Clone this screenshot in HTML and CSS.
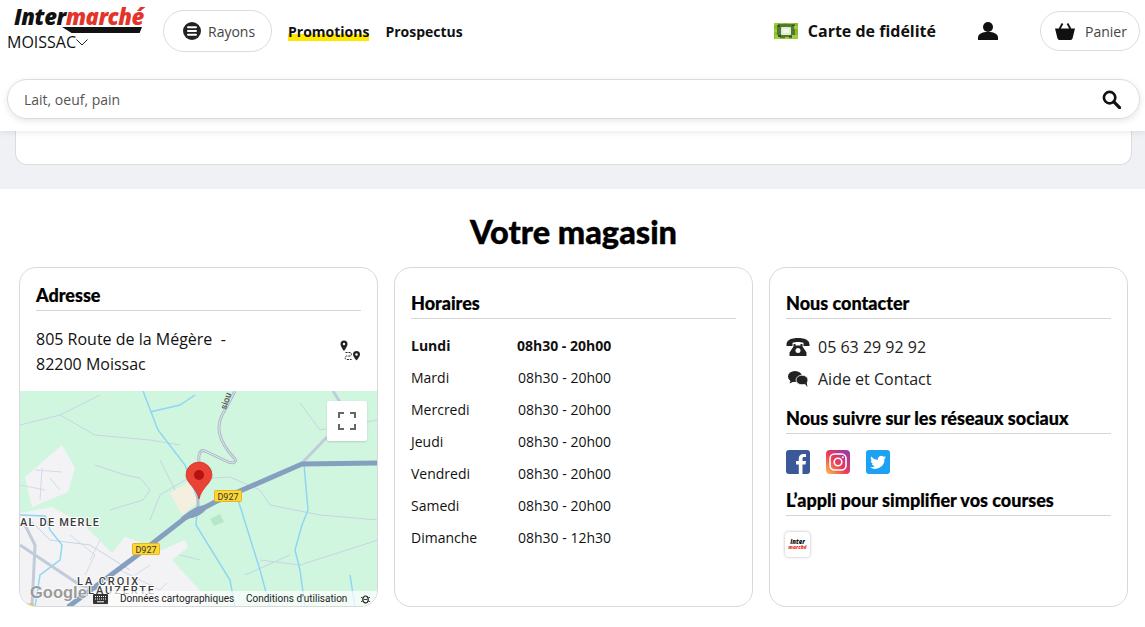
FILE: index.html
```html
<!DOCTYPE html>
<html lang="fr">
<head>
  <meta charset="UTF-8">
  <meta name="viewport" content="width=device-width, initial-scale=1.0">
  <title>Intermarché Moissac</title>
  <link rel="stylesheet" href="styles.css">
</head>
<body>
  <header class="site-header">
    <div class="top-row">
      <div class="store">
        <a class="logo" href="#">
          <span class="logo-text"><span class="logo-inter">Inter</span><span class="logo-marche">marché</span></span>
          <span class="logo-bar"></span>
        </a>
        <button class="store-btn">MOISSAC
          <svg viewBox="0 0 12 7" width="12" height="7"><polyline points="0.5,0.5 6,6 11.5,0.5" fill="none" stroke="#222" stroke-width="1"/></svg>
        </button>
      </div>
      <button class="pill rayons">
        <svg viewBox="0 0 18 18" width="18" height="18"><circle cx="9" cy="9" r="9" fill="#222"/><path d="M5 5.200h8M5 9h8M5 12.800h8" stroke="#fff" stroke-width="2" stroke-linecap="round"/></svg>
        Rayons
      </button>
      <nav class="main-nav">
        <a class="promo" href="#">Promotions</a>
        <a href="#">Prospectus</a>
      </nav>
      <a class="fidelite" href="#">
        <svg viewBox="0 0 24 16" width="24" height="16">
          <rect width="24" height="16" fill="#8dbb2c"/>
          <rect x="3" y="1" width="18" height="14" fill="#4f7a33"/>
          <path d="M0 0h4v2H0zM6 0h3v1H6zM14 0h5v1h-5zM20 3h4v3h-4zM0 6h3v3H0zM1 12h5v4H1zM11 14h4v2h-4zM18 12h6v4h-6z" fill="#a4cc38"/>
          <path d="M4 2h2v2H4zM18 2h2v1h-2zM4 12h3v2H4zM15 13h3v1h-3z" fill="#2f4f24"/>
          <rect x="7" y="4" width="10" height="8" rx="1" fill="#dfeccd"/>
          <path d="M9 6h6v4H9z" fill="#f2f7ea"/>
        </svg>
        Carte de fidélité
      </a>
      <a class="account" href="#">
        <svg viewBox="0 0 20 18" width="20" height="18"><circle cx="10" cy="5" r="5" fill="#111"/><path d="M0 18v-2.500C0 12 4 10 10 10s10 2 10 5.500V18z" fill="#111"/></svg>
      </a>
      <button class="pill panier">
        <svg viewBox="0 0 20 17" width="20" height="17"><path d="M0 5.500h20l-2.500 10a2 2 0 0 1-2 1.500h-11a2 2 0 0 1-2-1.500z" fill="#111"/><path d="M4.500 6L7.500 0.500M15.500 6L12.500 0.500" stroke="#111" stroke-width="1.800" fill="none"/></svg>
        Panier
      </button>
    </div>
    <div class="search">
      <span>Lait, oeuf, pain</span>
      <svg viewBox="0 0 20 20" width="19" height="19"><circle cx="8" cy="8" r="6" fill="none" stroke="#111" stroke-width="2.800"/><path d="M12.500 12.500L18.500 18.500" stroke="#111" stroke-width="3.400" stroke-linecap="round"/></svg>
    </div>
  </header>

  <div class="gray-band">
    <div class="prev-card"></div>
  </div>

  <main class="magasin">
    <h1>Votre magasin</h1>
    <div class="cards">
      <section class="card card-address">
        <h2>Adresse</h2>
        <div class="address-row">
          <p>805 Route de la Mégère &nbsp;-<br>82200 Moissac</p>
          <svg viewBox="0 0 22 22" width="22" height="22">
            <path d="M5 1.500a3.500 3.500 0 0 0-3.500 3.500c0 2.500 3.500 7 3.500 7s3.500-4.500 3.500-7A3.500 3.500 0 0 0 5 1.500z" fill="#222"/>
            <circle cx="5" cy="5" r="1.200" fill="#fff"/>
            <path d="M17.500 12a3.500 3.500 0 0 0-3.500 3.500c0 2 3.500 6 3.500 6s3.500-4 3.500-6a3.500 3.500 0 0 0-3.500-3.500z" fill="#222"/>
            <circle cx="17.500" cy="15.500" r="1.200" fill="#fff"/>
            <path d="M6.500 13.500h4.500c1.800 0 1.800 3.500 0 3.500H7.500c-1.800 0-1.800 3.500 0 3.500H12.500" fill="none" stroke="#222" stroke-width="1" stroke-dasharray="2 1"/>
          </svg>
        </div>
        <div class="map">
          <svg class="map-svg" viewBox="20 391 358 216" width="358" height="216">
            <rect x="20" y="391" width="358" height="216" fill="#d0f6e0"/>
            <path d="M25 477L62 445 75 468 68 492 32 507z" fill="#f3f3f5"/>
            <path d="M20 513L52 507 82 523 112 553 125 537 162 550 185 540 188 547 172 560 215 607H20z" fill="#f3f3f5"/>
            <path d="M170 493L192 480 197 503 182 515z" fill="#f5efdf"/>
            <path d="M210 519L220 514 224 522 214 526z" fill="#b5e8c8"/>
            <g fill="none" stroke="#d3dae6" stroke-width="1">
              <path d="M35 470L62 472M42 468L40 500M50 478L60 490M20 485L45 490M70 535L95 555 85 575M100 540L90 560M120 570L160 590 167 583M135 575L150 565"/>
            </g>
            <g fill="none" stroke="#c9d3e3" stroke-width="1">
              <path d="M20 425L60 415 100 395M60 415L95 435 150 440 180 445M95 465L125 475 140 478 150 490 143 500 110 510M160 460L175 490M150 520L160 495 185 480 230 477 260 490 270 505 320 515 378 520M260 560L300 565 378 540M300 403L320 430 378 420M245 575L290 555M180 555L200 560M30 520L50 540 90 545 130 570"/>
            </g>
            <g fill="none" stroke="#8fd6f2" stroke-width="1.500">
              <path d="M143 391L158 430 185 465 198 500 196 525 230 580 235 607"/>
              <path d="M150 412L180 405 195 395"/>
              <path d="M235 490L260 570 270 607"/>
              <path d="M304 464L308 510 302 525 295 550 300 570 305 607M350 575L355 607"/>
              <path d="M20 515L45 516 50 530 62 545 60 560 40 575 35 607"/>
            </g>
            <g fill="none">
              <path d="M235 391L225 410C215 425 217 440 235 459 237 463 232 464 226 461L205 451C200 449 198 455 199 462L208 470" stroke="#aeb9c8" stroke-width="3"/>
              <path d="M235 391L225 410C215 425 217 440 235 459 237 463 232 464 226 461L205 451C200 449 198 455 199 462L208 470" stroke="#e3e8ee" stroke-width="1"/>
              <path d="M198 470V510" stroke="#b4c0cf" stroke-width="3"/>
              <path d="M25 525L35 545 32 607M20 545L80 585 100 590M303 462L327 437M333 391L345 410" stroke="#c0ccda" stroke-width="3"/>
              <path d="M68 607L135 557 185 518 215 502 302 464 377 463" stroke="#869fbf" stroke-width="5"/>
              <path d="M184 517C192 510 200 507 206 506 204 512 194 518 184 517z" stroke="#869fbf" stroke-width="3"/>
            </g>
            <text class="road-name" transform="translate(226 410) rotate(-72)">siou</text>
            <g class="shield">
              <rect x="214.500" y="490.500" width="27" height="11" rx="1"/>
              <text x="228" y="499.500">D927</text>
              <rect x="132.500" y="543.500" width="27" height="11" rx="1"/>
              <text x="146" y="552.500">D927</text>
              <rect x="25" y="604" width="8" height="6" rx="1"/>
            </g>
            <g class="place">
              <text x="20" y="526">AL DE MERLE</text>
              <text class="wide" x="77" y="585">LA CROIX</text>
              <text class="wide" x="88" y="594">LAUZERTE</text>
            </g>
            <path d="M199 462a13 13 0 0 0-13 13c0 8 10 12 13 24 3-12 13-16 13-24a13 13 0 0 0-13-13z" fill="#ea4335" stroke="#c5221f" stroke-width="0.600"/>
            <circle cx="199" cy="475" r="5" fill="#b31412"/>
            <text class="google" x="30" y="598">Google</text>
          </svg>
          <button class="fullscreen">
            <svg viewBox="0 0 18 18" width="18" height="18"><path d="M1 6V1h5M12 1h5v5M17 12v5h-5M6 17H1v-5" fill="none" stroke="#666" stroke-width="2"/></svg>
          </button>
          <div class="map-foot">
            <svg viewBox="0 0 15 10" width="15" height="10"><rect width="15" height="10" rx="1" fill="#333"/><path d="M2 2.500h11M2 5h11" stroke="#fff" stroke-width="1" stroke-dasharray="1 1"/><path d="M4 7.800h7" stroke="#fff" stroke-width="1"/></svg>
            <span class="foot-data">Données cartographiques</span>
            <span class="foot-terms">Conditions d'utilisation</span>
            <svg class="foot-bug" viewBox="0 0 10 10" width="9" height="10"><ellipse cx="5" cy="5.500" rx="3" ry="3.800" fill="none" stroke="#222" stroke-width="1.300"/><path d="M0 3l2 1M10 3L8 4M0 8l2-1M10 8L8 7M3 5.500h4" stroke="#222"/></svg>
          </div>
        </div>
      </section>

      <section class="card">
        <h2>Horaires</h2>
        <ul class="hours">
          <li class="today"><span>Lundi</span><span>08h30 - 20h00</span></li>
          <li><span>Mardi</span><span>08h30 - 20h00</span></li>
          <li><span>Mercredi</span><span>08h30 - 20h00</span></li>
          <li><span>Jeudi</span><span>08h30 - 20h00</span></li>
          <li><span>Vendredi</span><span>08h30 - 20h00</span></li>
          <li><span>Samedi</span><span>08h30 - 20h00</span></li>
          <li><span>Dimanche</span><span>08h30 - 12h30</span></li>
        </ul>
      </section>

      <section class="card">
        <h2>Nous contacter</h2>
        <ul class="contact">
          <li>
            <svg viewBox="-0.500 0 24 18" width="24" height="18"><path d="M0 6.500C0 2 5 0 11.500 0S23 2 23 6.500V8h-6V4.800c-3-1-8-1-11 0V8H0z" fill="#222"/><path d="M7 6h2v1.500h5V6h2v2.500l4 6V18H3v-3.500l4-6z" fill="#222"/><circle cx="11.500" cy="12.500" r="2.500" fill="#fff"/></svg>
            05 63 29 92 92
          </li>
          <li>
            <svg viewBox="-2 0 24 16" width="24" height="16"><ellipse cx="7" cy="5.500" rx="7" ry="5.500" fill="#222"/><path d="M3 8.500L1.500 12.500l5.500-2.500z" fill="#222"/><ellipse cx="14" cy="9" rx="6" ry="4.800" fill="#222" stroke="#fff" stroke-width="0.800"/><path d="M16.500 12.500l3 3.500-1-5.500z" fill="#222"/></svg>
            Aide et Contact
          </li>
        </ul>
        <h2 class="sub">Nous suivre sur les réseaux sociaux</h2>
        <div class="socials">
          <svg viewBox="0 0 24 24" width="24" height="24"><rect width="24" height="24" rx="3" fill="#3b5998"/><path d="M16.500 24v-9.500h3l.5-3.500h-3.500V8.800c0-1 .4-1.700 1.800-1.700H20V4c-.4 0-1.500-.1-2.700-.1-2.700 0-4.500 1.600-4.500 4.600V11H10v3.500h2.800V24z" fill="#fff"/></svg>
          <svg viewBox="0 0 24 24" width="24" height="24">
            <defs><linearGradient id="ig" x1="0" y1="1" x2="1" y2="0"><stop offset="0" stop-color="#fdc14f"/><stop offset="0.450" stop-color="#ee3a57"/><stop offset="1" stop-color="#8a3ab9"/></linearGradient></defs>
            <rect width="24" height="24" rx="4" fill="url(#ig)"/><rect x="4" y="4" width="16" height="16" rx="4.500" fill="none" stroke="#fff" stroke-width="1.600"/><circle cx="12" cy="12" r="3.800" fill="none" stroke="#fff" stroke-width="1.600"/><circle cx="16.800" cy="7.200" r="1" fill="#fff"/>
          </svg>
          <svg viewBox="0 0 24 24" width="24" height="24"><rect width="24" height="24" rx="3" fill="#1da1f2"/><path d="M20 7.300c-.6.300-1.200.4-1.900.5.700-.4 1.200-1 1.400-1.800-.6.400-1.300.6-2 .8a3.300 3.300 0 0 0-5.600 3c-2.700-.1-5.100-1.400-6.700-3.400-.9 1.500-.4 3.400 1 4.400-.5 0-1-.2-1.500-.4 0 1.600 1.100 2.900 2.600 3.200-.5.100-1 .2-1.500.1.400 1.300 1.600 2.200 3 2.300A6.600 6.600 0 0 1 4 17.300 9.300 9.300 0 0 0 18.400 9c.6-.4 1.200-1 1.600-1.700z" fill="#fff"/></svg>
        </div>
        <h2 class="sub">L’appli pour simplifier vos courses</h2>
        <div class="app-icon">
          <span class="app-inter">Inter</span>
          <span class="app-marche">marché</span>
        </div>
      </section>
    </div>
  </main>
</body>
</html>
```

FILE: styles.css
```css
* { box-sizing: border-box; }
html, body { margin: 0; height: 627px; overflow: hidden; }
body { font-family: "Open Sans", "Liberation Sans", sans-serif; color: #111; background: #fff; }
a { color: inherit; text-decoration: none; }
button { font: inherit; background: none; border: none; padding: 0; color: inherit; }
ul { list-style: none; margin: 0; padding: 0; }

.site-header { position: relative; z-index: 2; height: 131px; padding: 10px 5px 0 7px; background: #fff; box-shadow: 0 2px 6px rgba(0, 0, 0, 0.08); }
.top-row { display: flex; align-items: flex-start; height: 42px; }

.store { width: 156px; display: flex; flex-direction: column; }
.logo { display: block; width: 130px; margin-left: 7px; height: 24px; position: relative; }
.logo-text { display: block; margin-top: -5px; font-family: "Open Sans", sans-serif; font-style: italic; font-weight: 800; font-size: 22px; line-height: 22px; letter-spacing: -0.45px; white-space: nowrap; }
.logo-inter { color: #111; }
.logo-marche { color: #e4342a; }
.logo-bar { position: absolute; left: 48px; top: 17px; width: 80px; height: 6px; background: #111; clip-path: polygon(0 0, 100% 0, 97% 100%, 12% 100%); }
.store-btn { display: flex; align-items: center; margin-top: -1px; font-size: 16px; line-height: 18px; color: #111; }

.pill { display: flex; align-items: center; border: 1px solid #dcdcdc; border-radius: 21px; font-size: 14px; color: #444; background: #fff; }
.rayons { width: 109px; height: 42px; padding-left: 19px; gap: 7px; }

.main-nav { display: flex; gap: 16px; margin-left: 16px; height: 42px; align-items: center; font-size: 14px; font-weight: 700; }
.promo { background: linear-gradient(to top, #ffe900 7px, transparent 7px); line-height: 18px; margin-top: 1px; }

.fidelite { display: flex; align-items: center; gap: 10px; margin-left: auto; height: 42px; font-size: 16px; font-weight: 700; }
.account { display: flex; align-items: center; height: 42px; margin-left: 42px; }
.panier { width: 100px; height: 40px; margin: 1px 0 0 42px; padding-left: 14px; gap: 10px; }

.search { display: flex; justify-content: space-between; align-items: center; height: 40px; margin-top: 27px; padding: 0 18px 0 16px; border: 1px solid #dcdcdc; border-radius: 20px; font-size: 14px; color: #555; box-shadow: 0 2px 6px rgba(0, 0, 0, 0.1); }

.gray-band { height: 58px; padding: 0 13px 24px 15px; background: #f0f1f5; }
.prev-card { height: 34px; background: #fff; border: 1px solid #dcdcdc; border-top: none; border-radius: 0 0 12px 12px; }

.magasin { padding: 0 17px 0 19px; background: #fff; }
h1 { margin: 0; height: 78px; padding-top: 23px; text-align: center; font-family: Lato, "Open Sans", sans-serif; font-weight: 900; font-size: 32.5px; line-height: 40px; color: #000; -webkit-text-stroke: 0.4px #000; }
.cards { display: grid; grid-template-columns: repeat(3, 359px); gap: 16px; }
.card { height: 340px; padding: 24px 16px 0; border: 1px solid #d9d9d9; border-radius: 17px; background: #fff; overflow: hidden; }
h2 { margin: 0; padding-bottom: 3px; border-bottom: 1px solid #d5d5d5; font-family: Lato, "Open Sans", sans-serif; font-weight: 900; font-size: 18px; line-height: 23px; color: #000; -webkit-text-stroke: 0.2px #000; }

.card-address { padding-top: 16px; display: flex; flex-direction: column; }
.address-row { display: flex; justify-content: space-between; align-items: flex-start; height: 80px; padding-top: 16px; }
.address-row svg { margin-top: 12px; }
.address-row p { margin: 0; font-size: 16px; line-height: 25px; }

.map { position: relative; flex: 1; margin: 0 -16px; overflow: hidden; }
.map-svg { display: block; }
.road-name { font: 500 9px Roboto, sans-serif; fill: #555; }
.shield rect { fill: #fdd835; stroke: #e9b424; stroke-width: 1; }
.shield text { font: 400 9px Roboto, sans-serif; fill: #333; text-anchor: middle; }
.place text { font: 500 11px Roboto, sans-serif; letter-spacing: 1.200px; fill: #3c3c3c; paint-order: stroke; stroke: #fff; stroke-width: 2px; }
.place text.wide { letter-spacing: 1.900px; }
.google { font: 700 16.500px "Liberation Sans", sans-serif; fill: #9a9a9a; stroke: #fff; stroke-width: 1px; paint-order: stroke; }
.fullscreen { position: absolute; top: 10px; right: 10px; width: 40px; height: 40px; display: flex; align-items: center; justify-content: center; background: #fff; border-radius: 2px; box-shadow: 0 1px 2px rgba(0, 0, 0, 0.15); }
.map-foot { position: absolute; right: 0; bottom: 0; left: 73px; height: 15px; display: flex; align-items: center; font: 400 10px Roboto, sans-serif; color: #222; background: linear-gradient(to right, transparent 16px, rgba(255, 255, 255, 0.7) 16px); }
.foot-data { margin-left: 12px; width: 126px; }
.foot-terms { width: 107px; }
.foot-bug { margin-left: 8px; }

.hours { margin-top: 10px; font-size: 14px; }
.hours li { display: grid; grid-template-columns: 107px auto; height: 32px; align-items: center; }
.today { font-weight: 700; }
.today span:last-child { margin-left: -1px; }

.contact { margin-top: 12px; font-size: 16px; color: #222; }
.contact li { display: flex; align-items: center; gap: 8px; height: 32px; }
.sub { margin-top: 12px; }
.socials { display: flex; gap: 16px; margin-top: 16px; height: 24px; }
.socials + .sub { margin-top: 15px; }
.app-icon { display: flex; flex-direction: column; align-items: center; justify-content: center; width: 25px; height: 25px; margin-top: 16px; margin-left: -1px; border-radius: 4px; background: #fff; box-shadow: 0 0 3px rgba(0, 0, 0, 0.3); }
.app-inter { font-size: 6px; line-height: 6px; font-weight: 800; font-style: italic; color: #111; }
.app-marche { font-size: 5px; line-height: 5px; font-weight: 800; font-style: italic; color: #e4342a; }
```
